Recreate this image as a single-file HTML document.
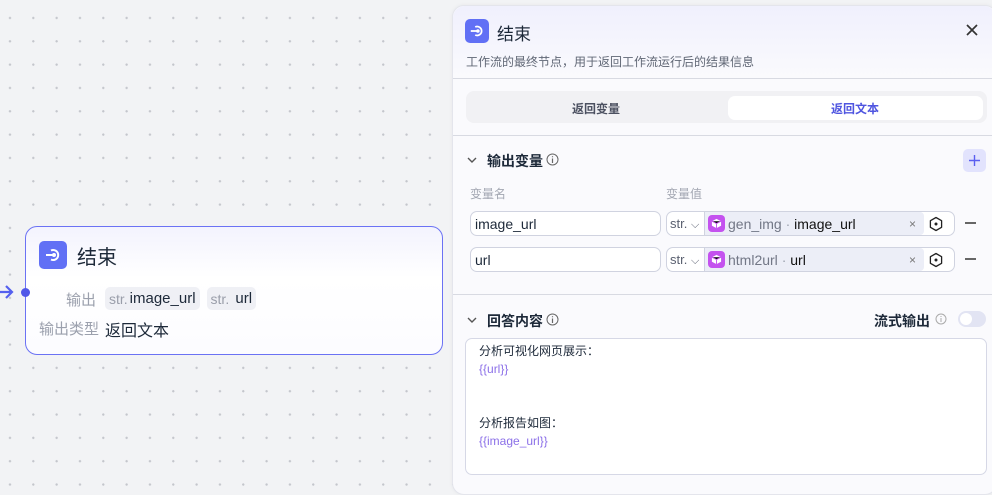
<!DOCTYPE html>
<html><head><meta charset="utf-8">
<style>
*{box-sizing:border-box;margin:0;padding:0}
body{width:992px;height:488px;overflow:hidden;position:relative;font-family:"Liberation Sans","Noto Sans CJK SC",sans-serif;background:#f2f3f5;
background-image:radial-gradient(circle,#c4c6cc 1px,transparent 1.3px);background-size:23.33px 23.33px;background-position:-1.7px 6.3px;color:#1d2939}
.a{position:absolute}
.ic{background:#6170f5;border-radius:5px;display:flex;align-items:center;justify-content:center}
.node{left:25px;top:226px;width:418px;height:129px;border:1.5px solid #6b72f4;border-radius:12px;background:linear-gradient(180deg,#f3f3fe,#fff 40%,#fcfcff)}
.tag{background:#eff0f5;border-radius:5px;height:23px;padding:0 4px;display:inline-flex;align-items:center;font-size:15px;color:#1d2939}
.tag i{font-style:normal;color:#9a9eaa;font-size:14px;margin-right:2px}
.panel{left:452px;top:5px;width:545px;height:490px;background:#fafafd;border:1px solid #e4e5ec;border-radius:12px;box-shadow:0 0 4px rgba(0,0,0,.05)}
.hr{height:1px;background:#d8dae2;left:0;width:545px}
.inp{border:1px solid #d0d3e0;border-radius:7px;background:#fff;height:25px}
.gray{color:#9ba0ad}
.chip{background:#eceef7;border-radius:4px;height:23px;display:flex;align-items:center;font-size:14px}
.pc{width:17px;height:17px;background:#c452ef;border-radius:4px;margin:0 3px;display:flex;align-items:center;justify-content:center}
</style></head><body>

<svg class="a" style="left:0;top:284px" width="16" height="16"><path d="M0 8H12M6 2L12 8L6 14" stroke="#5560ee" stroke-width="2.2" fill="none"/></svg>
<div class="a node">
  <div class="a ic" style="left:13px;top:14px;width:28px;height:28px"><svg width="18" height="18" viewBox="0 0 18 18"><path d="M7 4.5A5 5 0 1 1 7 13.5" stroke="#fff" stroke-width="2" fill="none"/><path d="M2 9H9" stroke="#fff" stroke-width="2"/><circle cx="10" cy="9" r="2" fill="#fff"/></svg></div>
  <div class="a" style="left:51px;top:14px;font-size:20px;color:#1d2939">结束</div>
  <div class="a gray" style="left:40px;top:62px;font-size:15px">输出</div>
  <div class="a" style="left:79px;top:60px;display:flex;gap:7px"><span class="tag"><i>str.</i>image_url</span><span class="tag"><i>str.</i>&nbsp;url</span></div>
  <div class="a gray" style="left:13px;top:91px;font-size:15px">输出类型</div>
  <div class="a" style="left:79px;top:90px;font-size:16px">返回文本</div>
</div>
<div class="a" style="left:21px;top:288px;width:9px;height:9px;border-radius:50%;background:#5057e8"></div>

<div class="a panel">
  <div class="a" style="left:0;top:0;width:543px;height:72px;border-radius:12px 12px 0 0;background:linear-gradient(180deg,#f0f0fd,#fafafd)"></div>
  <div class="a ic" style="left:12px;top:13px;width:24px;height:24px"><svg width="16" height="16" viewBox="0 0 18 18"><path d="M7 4.5A5 5 0 1 1 7 13.5" stroke="#fff" stroke-width="2" fill="none"/><path d="M2 9H9" stroke="#fff" stroke-width="2"/><circle cx="10" cy="9" r="2" fill="#fff"/></svg></div>
  <div class="a" style="left:44px;top:14px;font-size:17px">结束</div>
  <svg class="a" style="left:512px;top:17px" width="14" height="14"><path d="M2 2L12 12M12 2L2 12" stroke="#333" stroke-width="1.7"/></svg>
  <div class="a" style="left:13px;top:47px;font-size:12px;color:#606775">工作流的最终节点，用于返回工作流运行后的结果信息</div>
  <div class="a hr" style="top:72px"></div>
  <div class="a" style="left:13px;top:85px;width:521px;height:32px;background:#f1f1f4;border-radius:8px"></div>
  <div class="a" style="left:119px;top:94px;font-size:12px;font-weight:bold;color:#4b5060">返回变量</div>
  <div class="a" style="left:275px;top:90px;width:255px;height:24px;background:#fff;border-radius:7px"></div>
  <div class="a" style="left:378px;top:94px;font-size:12px;font-weight:bold;color:#4f55e0">返回文本</div>
  <div class="a hr" style="top:129px"></div>

  <svg class="a" style="left:14px;top:150px" width="10" height="8"><path d="M1 2L5 6L9 2" stroke="#555" stroke-width="1.4" fill="none"/></svg>
  <div class="a" style="left:34px;top:145px;font-size:14px;font-weight:bold">输出变量</div>
  <svg class="a" style="left:93px;top:147px" width="13" height="13"><circle cx="6.5" cy="6.5" r="5.5" stroke="#666" fill="none"/><path d="M6.5 5.5V10M6.5 3.3V4.3" stroke="#666" stroke-width="1.2"/></svg>
  <div class="a" style="left:510px;top:143px;width:23px;height:23px;border-radius:5px;background:#e2e3fd;display:flex;align-items:center;justify-content:center"><svg width="11" height="11"><path d="M5.5 0V11M0 5.5H11" stroke="#5a5ef0" stroke-width="1.4"/></svg></div>

  <div class="a gray" style="left:17px;top:179px;font-size:12px;color:#a3a7b2">变量名</div>
  <div class="a gray" style="left:213px;top:179px;font-size:12px;color:#a3a7b2">变量值</div>

  <div class="a inp" style="left:17px;top:205px;width:191px;padding:4px 4px;font-size:14px">image_url</div>
  <div class="a inp" style="left:213px;top:205px;width:289px;display:flex;align-items:center">
    <div style="width:37px;font-size:13px;color:#5a6070;padding-left:3px">str. <span style="font-size:11px">⌵</span></div>
    <div class="chip" style="border-left:1px solid #d0d3e0;width:220px;height:23px;border-radius:0 4px 4px 0"><div class="pc"><svg width="11" height="11" viewBox="0 0 12 12"><path d="M6 1L11 3.5V8.5L6 11L1 8.5V3.5Z" fill="#fff"/><path d="M1 3.5L6 6L11 3.5M6 6V11" stroke="#c452ef" stroke-width="1"/></svg></div><span style="color:#727786">gen_img</span>&nbsp;<span class="gray">·</span>&nbsp;<span style="color:#111">image_url</span><span style="margin-left:auto;margin-right:8px;color:#777;font-size:12px">×</span></div>
    <svg style="margin-left:4px" width="16" height="16"><path d="M8 1.5L13.6 4.7V11.3L8 14.5L2.4 11.3V4.7Z" stroke="#222" stroke-width="1.3" fill="none" stroke-linejoin="round"/><circle cx="8" cy="8" r="1.5" fill="#222"/></svg>
  </div>
  <div class="a" style="left:512px;top:216px;width:11px;height:1.5px;background:#666"></div>

  <div class="a inp" style="left:17px;top:241px;width:191px;padding:4px 4px;font-size:14px">url</div>
  <div class="a inp" style="left:213px;top:241px;width:289px;display:flex;align-items:center">
    <div style="width:37px;font-size:13px;color:#5a6070;padding-left:3px">str. <span style="font-size:11px">⌵</span></div>
    <div class="chip" style="border-left:1px solid #d0d3e0;width:220px;height:23px;border-radius:0 4px 4px 0"><div class="pc"><svg width="11" height="11" viewBox="0 0 12 12"><path d="M6 1L11 3.5V8.5L6 11L1 8.5V3.5Z" fill="#fff"/><path d="M1 3.5L6 6L11 3.5M6 6V11" stroke="#c452ef" stroke-width="1"/></svg></div><span style="color:#727786">html2url</span>&nbsp;<span class="gray">·</span>&nbsp;<span style="color:#111">url</span><span style="margin-left:auto;margin-right:8px;color:#777;font-size:12px">×</span></div>
    <svg style="margin-left:4px" width="16" height="16"><path d="M8 1.5L13.6 4.7V11.3L8 14.5L2.4 11.3V4.7Z" stroke="#222" stroke-width="1.3" fill="none" stroke-linejoin="round"/><circle cx="8" cy="8" r="1.5" fill="#222"/></svg>
  </div>
  <div class="a" style="left:512px;top:252px;width:11px;height:1.5px;background:#666"></div>

  <div class="a hr" style="top:288px"></div>

  <svg class="a" style="left:14px;top:310px" width="10" height="8"><path d="M1 2L5 6L9 2" stroke="#555" stroke-width="1.4" fill="none"/></svg>
  <div class="a" style="left:34px;top:305px;font-size:14px;font-weight:bold">回答内容</div>
  <svg class="a" style="left:93px;top:307px" width="13" height="13"><circle cx="6.5" cy="6.5" r="5.5" stroke="#666" fill="none"/><path d="M6.5 5.5V10M6.5 3.3V4.3" stroke="#666" stroke-width="1.2"/></svg>
  <div class="a" style="left:421px;top:305px;font-size:14px;font-weight:bold">流式输出</div>
  <svg class="a" style="left:482px;top:307px" width="12" height="12"><circle cx="6" cy="6" r="5" stroke="#aaa" fill="none"/><path d="M6 5V9M6 3V4" stroke="#aaa" stroke-width="1"/></svg>
  <div class="a" style="left:505px;top:305px;width:28px;height:16px;border-radius:8px;background:#e2e4f3"><div style="position:absolute;left:2px;top:2px;width:12px;height:12px;border-radius:50%;background:#fff"></div></div>

  <div class="a" style="left:12px;top:332px;width:522px;height:137px;background:#fff;border:1px solid #d6d8e6;border-radius:7px;font-size:12px;line-height:18px;padding:3px 13px">
    <div>分析可视化网页展示：</div>
    <div style="color:#8b6fe8">{{url}}</div>
    <div>&nbsp;</div><div>&nbsp;</div>
    <div>分析报告如图：</div>
    <div style="color:#8b6fe8">{{image_url}}</div>
  </div>
</div>
</body></html>
